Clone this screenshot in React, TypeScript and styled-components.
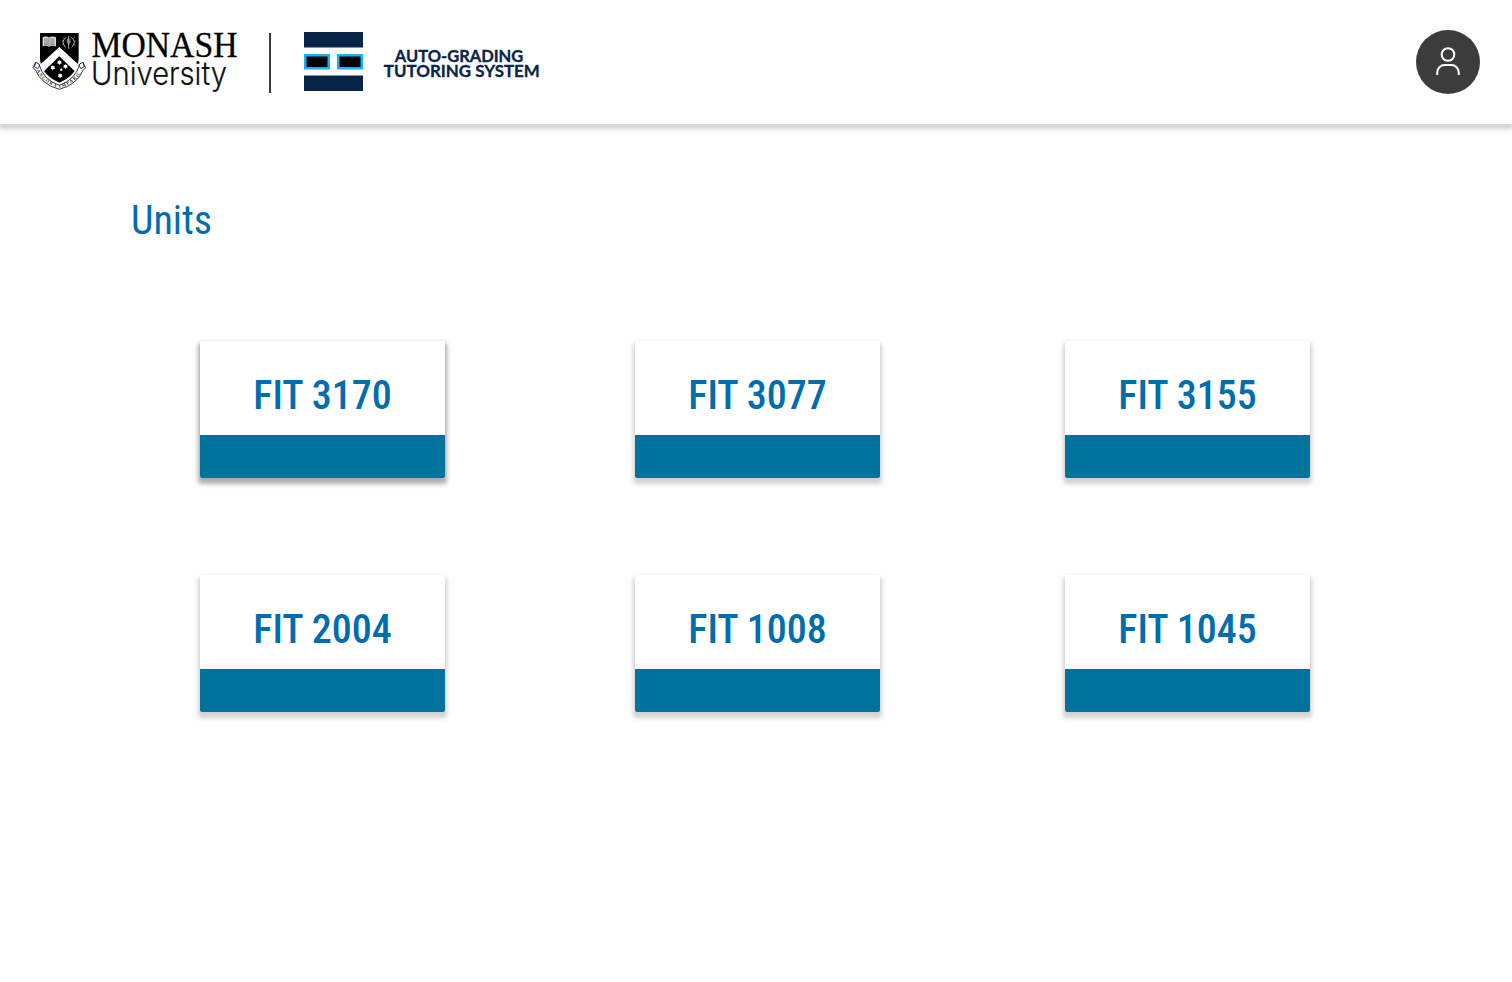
import React from "react";
import styled, { createGlobalStyle } from "styled-components";

const GlobalStyle = createGlobalStyle`
  * { box-sizing: border-box; }
  body { margin: 0; background: #fefefe; font-family: "Roboto Condensed", Roboto, sans-serif; }
`;

const Page = styled.div`
  min-height: 982px;
  background: #fefefe;
`;

const Header = styled.header`
  height: 124px;
  display: flex;
  align-items: center;
  justify-content: space-between;
  padding: 0 32px;
  background: #fefefe;
  box-shadow: 0 4px 4px 1px rgba(0, 0, 0, 0.17);
`;

const Brand = styled.div`
  display: flex;
  align-items: center;
`;

const MonashLogo = styled.svg`
  display: block;
  width: 208px;
  height: 84px;
  overflow: visible;
`;

const Divider = styled.div`
  width: 2px;
  height: 60px;
  margin: 2px 33px 0 29px;
  background: #3c3c3c;
`;

const SystemMark = styled.svg`
  display: block;
  width: 59px;
  height: 59px;
  margin: 0 20px 1px 0;
`;

const SystemName = styled.svg`
  display: block;
  width: 160px;
  height: 40px;
`;

const Avatar = styled.button`
  width: 64px;
  height: 64px;
  padding: 0;
  border: 0;
  border-radius: 50%;
  background: #3c3c3c;
  display: flex;
  align-items: center;
  justify-content: center;
`;

const Main = styled.main`
  padding: 73px 0 0 131px;
`;

const Title = styled.h1`
  margin: 0;
  font-size: 40px;
  line-height: 47px;
  font-weight: 400;
  font-stretch: 75%;
  color: #006dae;
`;

const Grid = styled.div`
  display: grid;
  grid-template-columns: 435px 430px 245px;
  row-gap: 97px;
  padding: 97px 0 0 69px;
`;

const Card = styled.article<{ $active?: boolean }>`
  width: 245px;
  height: 137px;
  display: flex;
  flex-direction: column;
  border-radius: 2px;
  overflow: hidden;
  background: #fff;
  box-shadow: 0 4px 4px 2px rgba(0, 0, 0, ${(p) => (p.$active ? 0.31 : 0.17)}),
    0 0 2px rgba(0, 0, 0, ${(p) => (p.$active ? 0.1 : 0.04)});
`;

const Code = styled.div`
  height: 94px;
  display: flex;
  align-items: center;
  justify-content: center;
  padding-top: 15px;
  font-size: 40px;
  font-weight: 500;
  font-stretch: 75%;
  color: #006dae;
`;

const Band = styled.div`
  flex: 1;
  background: #00739d;
`;

const units = ["FIT 3170", "FIT 3077", "FIT 3155", "FIT 2004", "FIT 1008", "FIT 1045"];

function University() {
  return (
    <MonashLogo viewBox="32 20 208 84" role="img" aria-label="Monash University">
      <g transform="translate(25 22) scale(.33333)">
        <path d="M32 121 42 126Q53 172 103 190Q153 172 164 126L174 121 182 137 174 145Q157 187 103 202Q49 187 32 145L24 137Z" fill="#fff" stroke="#111" strokeWidth="2.5" />
        <path d="M32 121 28 134 38 140 45 128M174 121 178 134 168 140 161 128" fill="none" stroke="#111" strokeWidth="2.5" />
        <path id="motto" d="M33 143Q51 183 103 198Q155 183 173 143" fill="none" />
        <text fontFamily="Liberation Serif, serif" fontWeight="700" fontSize="14" fill="#222">
          <textPath href="#motto" startOffset="3" textLength="164">ANCORA IMPARO</textPath>
        </text>
        <path d="M45 33H161V108Q160 157 103 182Q46 157 45 108Z" fill="#000" />
        <path d="M103 75 161 128Q157 141 151 149L103 103L55 149Q49 141 45 128Z" fill="#fff" />
        <path d="M53 46Q63 41 72 46Q82 41 93 46V73Q82 69 72 74Q63 69 53 73Z" fill="#ddd" />
        <path d="M72 46V74M57 51H69M57 57H69M57 63H69M57 68H69M76 51H89M76 57H89M76 63H89M76 68H89" stroke="#444" strokeWidth="2" />
        <path d="M131 42V80M124 46Q105 58 122 76M138 46Q157 58 140 76M127 50V62Q131 66 135 62V50" fill="none" stroke="#ccc" strokeWidth="2.5" />
        <path d="M118 50 113 46M116 58 110 56M117 66 111 69M144 50 149 46M146 58 152 56M145 66 151 69" stroke="#aaa" strokeWidth="2" />
        <g fill="#fff">
          <path id="star" d="m103 113 2 4 5-1-2 4 3 4-5 1-3 4-2-4-5-1 3-4-2-4 5 1z" />
          <use href="#star" x="-20" y="16" />
          <use href="#star" x="18" y="12" />
          <use href="#star" x="2" y="40" />
          <circle cx="109" cy="143" r="3.5" />
        </g>
      </g>
      <text x="91.5" y="57" fontFamily="Liberation Serif, serif" fontSize="36" fill="#000" stroke="#000" strokeWidth=".3" textLength="146" lengthAdjust="spacingAndGlyphs">MONASH</text>
      <text x="91" y="85.3" fontFamily="Inter, sans-serif" fontWeight="300" fontSize="32.5" fill="#111" stroke="#111" strokeWidth=".2" textLength="136" lengthAdjust="spacingAndGlyphs">University</text>
    </MonashLogo>
  );
}

export default function App() {
  return (
    <Page>
      <GlobalStyle />
      <Header>
        <Brand>
          <University />
          <Divider />
          <SystemMark viewBox="0 0 59 59">
            <path d="M0 0H59V15.5H0ZM0 43.5H59V59H0Z" fill="#082548" />
            <path d="M1.25 23.25H24.75V36.25H1.25ZM34.25 23.25H57.75V36.25H34.25Z" fill="#000" stroke="#13b5f5" strokeWidth="2.5" />
          </SystemMark>
          <SystemName viewBox="383 42 160 40">
            <g fontFamily="Lato, sans-serif" fontWeight="700" fontSize="16.3" fill="#082548" stroke="#082548" strokeWidth=".3">
              <text x="394.8" y="61.5" textLength="128.5" lengthAdjust="spacingAndGlyphs">AUTO-GRADING</text>
              <text x="383.8" y="77.4" textLength="156" lengthAdjust="spacingAndGlyphs">TUTORING SYSTEM</text>
            </g>
          </SystemName>
        </Brand>
        <Avatar aria-label="Account">
          <svg width="64" height="64" viewBox="0 0 64 64" fill="none" stroke="#fff" strokeWidth="2">
            <circle cx="32" cy="24.5" r="6.3" />
            <path d="M21.2 45V42.5A7.5 7.5 0 0 1 28.7 35H35.3A7.5 7.5 0 0 1 42.8 42.5V45" />
          </svg>
        </Avatar>
      </Header>
      <Main>
        <Title>Units</Title>
        <Grid>
          {units.map((unit, i) => (
            <Card key={unit} $active={i === 0}>
              <Code>{unit}</Code>
              <Band />
            </Card>
          ))}
        </Grid>
      </Main>
    </Page>
  );
}
